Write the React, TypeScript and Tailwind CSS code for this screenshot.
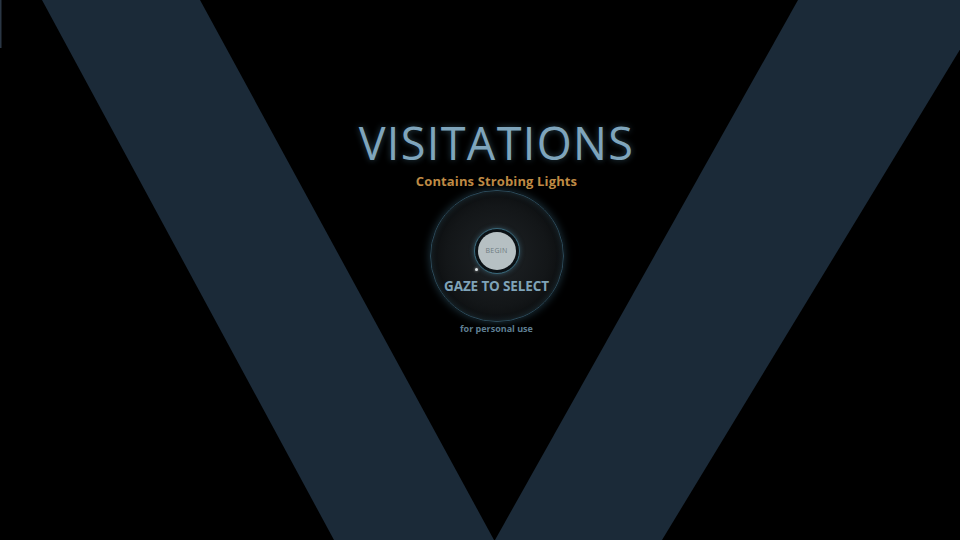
const Backdrop = () => (
  <svg className="absolute inset-0" width="960" height="540" viewBox="0 0 960 540">
    {/* the two strokes of the big V */}
    <polygon points="42,0 200,0 494,540 334,540" fill="#1b2a38" />
    <polygon points="798,0 990,0 662,540 495,540" fill="#1b2a38" />
    <rect x="0" y="0" width="1.5" height="48" fill="#2a3644" />
  </svg>
);

const GazeRing = () => {
  return (
    <div className="relative mt-[1px] w-[134px] h-[132px] rounded-full border-[1.5px] border-[#2c4a5a] shadow-[0_0_8px_rgba(70,125,150,0.45),inset_0_0_6px_rgba(70,125,150,0.3)] bg-[radial-gradient(circle_at_50%_50%,#1f2326_0%,#131618_55%,#020304_100%)] flex flex-col items-center">
      {/* begin button */}
      <div className="mt-[37px] w-[46px] h-[46px] rounded-full border-[1.5px] border-[#3b6a7c] bg-[#0b1115] p-[3px] shadow-[0_0_5px_rgba(80,140,165,0.5)]">
        <div className="w-full h-full rounded-full bg-[#b6c0c3] flex items-center justify-center">
          <span className="text-[7px] tracking-[0.04em] text-[#6c7a80] font-['Open_Sans',sans-serif]">BEGIN</span>
        </div>
      </div>
      <div className="absolute left-[44px] top-[77px] w-[3px] h-[3px] rounded-full bg-[#dfe6e8] shadow-[0_0_3px_rgba(255,255,255,0.7)]" />
      <p className="mt-[4px] text-[13.5px] leading-[16px] font-bold tracking-[-0.01em] text-[#7fa3b8] font-['Open_Sans',sans-serif]">
        GAZE TO SELECT
      </p>
    </div>
  );
};

export default function App() {
  return (
    <div className="relative w-[960px] h-[540px] bg-black overflow-hidden">
      <Backdrop />

      <div className="relative flex flex-col items-center pt-[120px] pl-[33px]">
        <h1 className="text-[45px] leading-[45px] font-normal tracking-[0.03em] text-[#7fa5bc] font-['Open_Sans',sans-serif] [text-shadow:0_0_6px_rgba(90,150,180,0.45)]">
          VISITATIONS
        </h1>
        <p className="mt-[8px] text-[13px] leading-[16px] font-bold tracking-[0.01em] text-[#bf8a44] font-['Open_Sans',sans-serif]">
          Contains Strobing Lights
        </p>
        <GazeRing />
        <p className="mt-[1px] text-[9px] leading-[12px] font-bold text-[#5f7f93] font-['Open_Sans',sans-serif]">
          for personal use
        </p>
      </div>
    </div>
  );
}
